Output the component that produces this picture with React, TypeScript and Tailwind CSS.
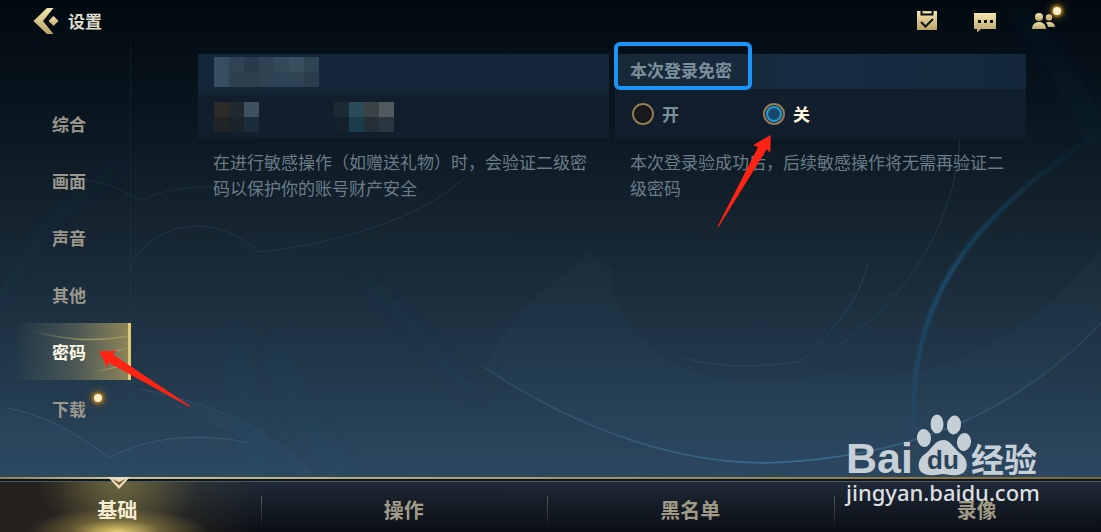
import React, { useState } from 'react';

interface Option {
  value: string;
  label: string;
  hasNotice?: boolean;
}

// Side menu entries
const SECTIONS: Option[] = [
  { value: 'general', label: '综合' },
  { value: 'display', label: '画面' },
  { value: 'sound', label: '声音' },
  { value: 'other', label: '其他' },
  { value: 'password', label: '密码' },
  { value: 'download', label: '下载', hasNotice: true },
];

// Bottom tabs
const TABS: Option[] = [
  { value: 'basic', label: '基础' },
  { value: 'controls', label: '操作' },
  { value: 'blacklist', label: '黑名单' },
  { value: 'replay', label: '录像' },
];

const SKIP_OPTIONS: Option[] = [
  { value: 'on', label: '开' },
  { value: 'off', label: '关' },
];

// Censored blocks, row by row
const TITLE_BLOCKS = [
  'bg-[#384d5d]', 'bg-[#304352]', 'bg-[#273b4a]', 'bg-[#304251]', 'bg-[#344a58]', 'bg-[#384f5d]', 'bg-[#304553]',
  'bg-[#384d5d]', 'bg-[#2c404f]', 'bg-[#2d3f4d]', 'bg-[#304252]', 'bg-[#2e4354]', 'bg-[#304352]', 'bg-[#293d4c]',
];
const LEFT_BLOCKS = [
  'bg-[#2d2b29]', 'bg-[#20292e]', 'bg-[#40505f]',
  'bg-[#202628]', 'bg-[#18232b]', 'bg-[#1d2c3a]',
];
const RIGHT_BLOCKS = [
  'bg-[#1b2a32]', 'bg-[#294b5a]', 'bg-[#3b4347]', 'bg-[#535a5f]',
  'bg-[#14212d]', 'bg-[#1b3c4a]', 'bg-[#252f38]', 'bg-[#29363f]',
];

const NoticeDot: React.FC<{ className?: string }> = ({ className = '' }) => (
  <span
    className={`absolute size-2 rounded-full bg-[#fdf0cf] shadow-[0_0_3px_2px_#a8791c,0_0_8px_3px_rgba(168,121,28,.5)] ${className}`}
  />
);

const GoldGradient: React.FC<{ id: string }> = ({ id }) => (
  <linearGradient id={id} x1="0" y1="0" x2="0" y2="1">
    <stop offset="0" stopColor="#f6e6ae" />
    <stop offset="1" stopColor="#b9a468" />
  </linearGradient>
);

const Backdrop: React.FC = () => (
  <svg
    className="absolute inset-0 size-full"
    viewBox="0 0 1101 532"
    preserveAspectRatio="none"
    fill="none"
    aria-hidden="true"
  >
    <defs>
      <linearGradient id="crescent" x1="0" y1="0" x2="0" y2="1">
        <stop offset="0" stopColor="#2c4654" stopOpacity=".3" />
        <stop offset="1" stopColor="#2d5573" stopOpacity=".35" />
      </linearGradient>
      <linearGradient id="rim" x1="0" x2="1">
        <stop offset="0" stopColor="#3d6480" stopOpacity=".4" />
        <stop offset=".5" stopColor="#4280ad" stopOpacity=".7" />
        <stop offset="1" stopColor="#3d6480" stopOpacity=".3" />
      </linearGradient>
      <linearGradient id="arc" x1="0" y1="0" x2="0" y2="1">
        <stop offset="0" stopColor="#185780" stopOpacity="0" />
        <stop offset=".5" stopColor="#185780" stopOpacity=".8" />
        <stop offset="1" stopColor="#1d5f88" stopOpacity=".2" />
      </linearGradient>
      <filter id="soft"><feGaussianBlur stdDeviation="1.500" /></filter>
      <filter id="wide" x="-20%" y="-20%" width="140%" height="140%"><feGaussianBlur stdDeviation="10" /></filter>
    </defs>
    <path
      d="M590 253C545 285 505 325 485 368C560 418 660 463 767 463C900 458 1010 420 1101 323V250C1000 370 900 385 830 372C770 390 705 382 668 360C630 332 609 300 612 270Z"
      fill="url(#crescent)"
      opacity=".4"
    />
    <path d="M485 368C560 418 660 463 767 463C900 458 1010 420 1101 323" stroke="url(#rim)" strokeWidth="1.500" />
    <path d="M682 357C710 368 765 368 801 361C830 335 860 300 868 263" stroke="#34546d" strokeOpacity=".5" />
    <path d="M833 349C890 312 955 240 960 135" stroke="#34546d" strokeOpacity=".4" />
    <path d="M1101 130C1010 195 905 270 914 430" stroke="url(#arc)" strokeWidth="4" filter="url(#soft)" />
    <path d="M130 270C145 225 215 208 258 252C330 245 420 220 464 178" stroke="#294257" strokeOpacity=".6" />
    <path d="M78 179C110 182 125 192 140 201C160 190 190 186 215 187" stroke="#21394b" strokeOpacity=".6" />
    <path d="M140 389C215 405 270 425 312 477V477H0V408C45 415 80 435 109 458C150 435 205 433 250 443" fill="#2e5975" fillOpacity=".15" />
    <path d="M140 389C215 405 270 425 312 477" stroke="#365770" strokeOpacity=".6" />
    <path d="M7 408C45 415 80 435 109 458C150 435 205 433 250 443" stroke="#3d637d" strokeOpacity=".7" />
    <g filter="url(#wide)" stroke="#1d5272">
      <path d="M0 300C40 225 80 190 128 165M350 260C390 300 430 350 480 400" strokeWidth="14" strokeOpacity=".08" />
      <path d="M235 330C235 370 245 420 270 490M275 340C285 400 315 440 360 490" strokeWidth="14" strokeOpacity=".12" />
      <path d="M1010 0C1050 50 1085 100 1101 150" strokeWidth="24" strokeOpacity=".08" />
    </g>
  </svg>
);

const Mosaic: React.FC<{ blocks: string[]; className: string }> = ({ blocks, className }) => (
  <div className={`grid auto-rows-[15px] ${className}`} aria-hidden="true">
    {blocks.map((color, i) => (
      <span key={i} className={color} />
    ))}
  </div>
);

const Header: React.FC = () => (
  <header className="relative flex h-[42px] items-center justify-between pr-[46px] pl-8">
    <button className="flex items-center gap-2 text-[17px] font-bold text-[#dfdbcb]">
      <svg className="h-7 w-7" viewBox="0 0 28 28" aria-hidden="true">
        <defs><GoldGradient id="goldBack" /></defs>
        <path d="M15 1H21.500L11 14L21.500 27H15L1.500 14Z" fill="url(#goldBack)" />
        <path d="M21.500 9L26.500 14L21.500 19L16.500 14Z" fill="url(#goldBack)" />
      </svg>
      设置
    </button>

    <div className="flex items-center gap-[34px]">
      <button aria-label="任务">
        <svg className="size-6" viewBox="0 0 24 24" aria-hidden="true">
          <defs><GoldGradient id="goldTask" /></defs>
          <path d="M2 2H5.500V6.500H18.500V2H22V21H2Z" fill="url(#goldTask)" />
          <path d="M7.500 2H16.500V4.500H7.500Z" fill="#e9d9a2" />
          <path d="M6 13L10.500 17.500L18 10" fill="none" stroke="#0b141b" strokeWidth="2" />
        </svg>
      </button>
      <button aria-label="聊天">
        <svg className="size-6" viewBox="0 0 24 24" aria-hidden="true">
          <defs><GoldGradient id="goldChat" /></defs>
          <path d="M1 4H23V20H8L4 23.500V20H1Z" fill="url(#goldChat)" />
          <path d="M5 11h3v3H5zM11 11h3v3h-3zM17 11h3v3h-3z" fill="#0b141b" />
        </svg>
      </button>
      <button className="relative" aria-label="好友">
        <svg className="size-6" viewBox="0 0 24 24" aria-hidden="true">
          <defs><GoldGradient id="goldFriends" /></defs>
          <g fill="url(#goldFriends)">
            <circle cx="8" cy="8" r="4" />
            <path d="M1 20C1 10.500 15 10.500 15 20Z" />
            <circle cx="18" cy="8.500" r="3.200" />
            <path d="M14.500 13.500C19 12 24 13.500 24 18H17C16.800 16 16 14.500 14.500 13.500Z" />
          </g>
        </svg>
        <NoticeDot className="-top-0.5 -right-1.5" />
      </button>
    </div>
  </header>
);

const SideMenu: React.FC<{ value: string; onChange: (value: string) => void }> = ({ value, onChange }) => (
  <nav className="relative w-[131px] shrink-0 pt-[53px] shadow-[inset_-1px_0_0_rgba(59,92,114,.15)]">
    {SECTIONS.map((section) => {
      const isActive = section.value === value;
      return (
        <button
          key={section.value}
          onClick={() => onChange(section.value)}
          className={`relative flex h-[57px] w-full items-center pl-[52px] text-[17px] leading-6 font-bold ${
            isActive
              ? 'border-r-3 border-[#e3c877] bg-linear-to-r from-transparent from-10% via-[#566159]/70 via-55% to-[#8d8458] text-[#fdf8e4]'
              : 'text-[#9a978c]'
          }`}
        >
          {isActive && (
            <svg
              className="absolute inset-0 size-full"
              viewBox="0 0 128 57"
              preserveAspectRatio="none"
              fill="none"
              aria-hidden="true"
            >
              <defs>
                <linearGradient id="streak" x1="0" x2="1">
                  <stop offset="0" stopColor="#cdbb6b" stopOpacity="0" />
                  <stop offset=".6" stopColor="#cdbb6b" stopOpacity=".6" />
                  <stop offset="1" stopColor="#cdbb6b" stopOpacity=".3" />
                </linearGradient>
              </defs>
              <g stroke="url(#streak)" strokeWidth="1.500">
                <path d="M30 7C60 16 90 20 128 13" />
                <path d="M90 49C105 47 118 44 128 41M105 30C115 28 122 27 128 25" strokeOpacity=".7" />
              </g>
            </svg>
          )}
          <span className="relative">{section.label}</span>
          {section.hasNotice && <NoticeDot className="top-3.5 left-[94px]" />}
        </button>
      );
    })}

    {/* Pointer to the active entry */}
    <svg className="absolute top-[308px] left-[98px] h-[58px] w-[94px]" viewBox="0 0 94 58" aria-hidden="true">
      <path d="M1 1.300L18.700 .7L14.700 4.300L92 56L91.500 57L10.700 12.700L9.300 17.700Z" fill="#ff2314" />
    </svg>
  </nav>
);

const SecondPasswordCard: React.FC = () => (
  <section>
    <div className="h-[85px] bg-linear-to-b from-[#142739] from-40% to-[#111f2d] to-50% pt-[3px] pl-4">
      <Mosaic blocks={TITLE_BLOCKS} className="w-[105px] grid-cols-7" />
      <div className="flex gap-[75px] pt-[15px]">
        <Mosaic blocks={LEFT_BLOCKS} className="w-[45px] grid-cols-3" />
        <Mosaic blocks={RIGHT_BLOCKS} className="w-[60px] grid-cols-4" />
      </div>
    </div>
    <p className="px-[15px] pt-2.5 text-[17px] leading-[26px] text-[#6a7c88]">
      在进行敏感操作（如赠送礼物）时，会验证二级密码以保护你的账号财产安全
    </p>
  </section>
);

const SkipPasswordCard: React.FC = () => {
  const [skip, setSkip] = useState('off');

  return (
    <section className="relative">
      <div className="bg-[#111f2d]" role="radiogroup" aria-labelledby="skip-title">
        <h2
          id="skip-title"
          className="flex h-[35px] items-center bg-linear-to-r from-[#182836] via-[#162c41] to-[#14283a] px-[15px] pb-1 text-[17px] font-bold text-[#7c909c]"
        >
          本次登录免密
        </h2>
        <div className="flex h-[50px] items-center pl-[17px]">
          {SKIP_OPTIONS.map((option) => (
            <label
              key={option.value}
              className="flex w-[131px] items-center gap-2 text-[17px] font-bold text-[#7c909c] has-checked:text-[#fdf6dd]"
            >
              <input
                type="radio"
                name="skip"
                value={option.value}
                checked={skip === option.value}
                onChange={() => setSkip(option.value)}
                className="size-[22px] appearance-none rounded-full border-2 border-[#937b52] bg-[#17191c] shadow-[inset_0_0_0_1px_#080d12] checked:bg-[#17476b] checked:shadow-[inset_0_0_0_1px_#0b1620,inset_0_0_1px_3px_#2b9fd8]"
              />
              {option.label}
            </label>
          ))}
        </div>
      </div>
      <p className="px-[15px] pt-2.5 text-[17px] leading-[26px] text-[#6a7c88]">
        本次登录验成功后，后续敏感操作将无需再验证二级密码
      </p>

      {/* Highlight round the title, pointer to the chosen option */}
      <span className="absolute -top-3 -left-px h-12 w-[138px] rounded-md border-4 border-[#1a94f8]" />
      <svg className="absolute top-20 left-[101px] h-[94px] w-[56px]" viewBox="0 0 56 94" aria-hidden="true">
        <path d="M54.700 1L37.300 11L42 13.300L1.500 92.500L2.500 93L50.700 15.300L54.300 19Z" fill="#ff2314" />
      </svg>
    </section>
  );
};

const BottomTabs: React.FC<{ value: string; onChange: (value: string) => void }> = ({ value, onChange }) => (
  <footer className="relative overflow-hidden bg-linear-to-b from-[#202d3a] to-[#0b0e15]">
    <div className="h-0.5 bg-linear-to-r from-[#8f8250] via-[#cfc48d] via-10% to-[#80662c]" />
    <div className="h-[3px] border-b border-[#4d5b63] bg-[#0d141b]" />
    <nav className="-mr-[19px] -ml-[26px] flex h-[50px]">
      {TABS.map((tab, i) => {
        const isActive = tab.value === value;
        return (
          <button
            key={tab.value}
            onClick={() => onChange(tab.value)}
            className={`relative flex flex-1 items-center justify-center pt-1.5 text-xl leading-6 font-bold ${
              isActive
                ? 'bg-[radial-gradient(ellipse_90px_24px_at_50%_100%,#e6cf70,rgba(160,140,70,.5)_50%,transparent),radial-gradient(ellipse_80px_60px_at_50%_0%,rgba(140,130,70,.6),transparent),linear-gradient(90deg,#24211e,#24211e_30%,rgba(80,72,48,.6)_50%,transparent)] text-[#f6edcf]'
                : 'text-[#a09a86]'
            }`}
          >
            {i > 0 && <span className="absolute bottom-1 left-0 h-8 w-px bg-linear-to-b from-[#5b5a55] to-transparent" />}
            {tab.label}
          </button>
        );
      })}
    </nav>
    <svg className="absolute top-0 left-[107px] h-3 w-6" viewBox="0 0 24 12" aria-hidden="true">
      <path d="M1 0H23L12 12Z" fill="#e9dfc0" />
      <path d="M5.500 2L12 5L18.500 2L12 8.500Z" fill="#7c5f3c" />
    </svg>
  </footer>
);

const Watermark: React.FC = () => (
  <div className="pointer-events-none absolute right-[60px] bottom-6 w-[195px] text-[#c6ced6]">
    <div className="flex h-[62px] items-end">
      <span className="font-['Liberation_Sans',sans-serif] text-[43px] leading-9 font-bold">Bai</span>
      <svg className="h-[62px] w-[58px] shrink-0" viewBox="0 0 58 62" fill="currentColor" aria-hidden="true">
        <ellipse cx="11" cy="24" rx="7" ry="9" transform="rotate(-8 11 24)" />
        <ellipse cx="24" cy="10" rx="6.500" ry="9.500" />
        <ellipse cx="41" cy="11" rx="7" ry="9.500" transform="rotate(8 41 11)" />
        <ellipse cx="51" cy="28" rx="7" ry="9" transform="rotate(8 51 28)" />
        <path d="M30 26C38 26 40 34 47 39C57 46 56 60 44 61C38 62 35 60 30 60C25 60 21 62 16 61C3 60 3 46 12 40C19 35 22 26 30 26Z" />
        <text x="30" y="55" textAnchor="middle" fontFamily="Liberation Sans, sans-serif" fontSize="26" fontWeight="bold" fill="#2a4257">du</text>
      </svg>
      <span className="text-[33px] leading-9 font-bold">经验</span>
    </div>
    <div className="font-['Noto_Sans',sans-serif] text-[22px] leading-8 font-medium text-[#dcdfe2]">jingyan.baidu.com</div>
  </div>
);

/**
 * Game settings screen, opened on the password section
 */
const App: React.FC = () => {
  const [section, setSection] = useState('password');
  const [tab, setTab] = useState('basic');

  return (
    <div className="relative flex min-h-screen flex-col overflow-hidden bg-linear-to-b from-[#020910] via-[#15242f] via-42% to-[#2c4861] to-90% font-['Noto_Sans_CJK_SC',sans-serif]">
      <Backdrop />
      <Header />
      <div className="relative flex flex-1">
        <SideMenu value={section} onChange={setSection} />
        <main className="grid flex-1 grid-cols-2 items-start gap-1.5 pt-3 pr-[75px] pl-[67px]">
          <SecondPasswordCard />
          <SkipPasswordCard />
        </main>
      </div>
      <BottomTabs value={tab} onChange={setTab} />
      <Watermark />
    </div>
  );
};

export default App;
